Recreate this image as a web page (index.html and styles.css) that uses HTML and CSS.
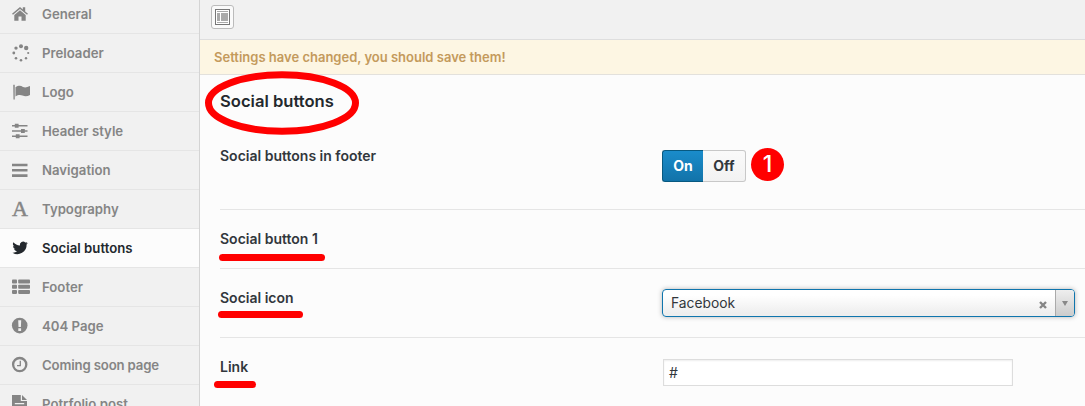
FILE: index.html
```html
<!DOCTYPE html>
<html lang="en">
<head>
<meta charset="utf-8">
<title>Theme options</title>
<link rel="stylesheet" href="styles.css">
</head>
<body>
<div class="app">
  <nav class="sidebar">
    <a class="item"><svg class="icon" viewBox="0 0 20 20"><path d="M2 9.800 10 3l2.800 2.400V3.300h2.400v4.100L18 9.800l-1 1L10 4.900 3 10.800z"/><path d="M4.300 11 10 6.200l5.700 4.800v5.700h-4.200v-4.200H8.500v4.200H4.300z"/></svg><span>General</span></a>
    <a class="item"><svg class="icon" viewBox="0 0 20 20"><circle cx="11" cy="3.200" r="2"/><circle cx="16.200" cy="5" r="2.200"/><circle cx="6" cy="5.100" r="1.700"/><circle cx="3.800" cy="10" r="1.400"/><circle cx="6" cy="15.200" r="1.300"/><circle cx="11" cy="17.300" r="1.300"/><circle cx="16" cy="15.200" r="1.200"/><circle cx="18.200" cy="10" r="1.100"/></svg><span>Preloader</span></a>
    <a class="item"><svg class="icon" viewBox="0 0 20 20"><path d="M3 3.200a1.200 1.200 0 0 1 2 0v14.300H3.300z" opacity=".75"/><path d="M5.500 5.300c3-2 5.200-1.700 7.500-.4 2 .9 3.800.5 7-.9v9c-2.500 1.300-4.800 1.800-7.500.5-2.500-1-4.500-.6-7 .9z"/></svg><span>Logo</span></a>
    <a class="item"><svg class="icon" viewBox="0 0 20 20"><path d="M2 4h15.500v1.500H2zM2 9.200h15.500v1.500H2zM2 14.400h15.500v1.500H2z"/><path d="M4.800 2.700h3.800v4H4.800zM11 8h3.800v4H11zM5.800 13.200h3.800v4H5.800z"/></svg><span>Header style</span></a>
    <a class="item"><svg class="icon" viewBox="0 0 20 20"><path d="M2 3.700h15.500v2.600H2zM2 9h15.500v2.600H2zM2 14.300h15.500v2.600H2z"/></svg><span>Navigation</span></a>
    <a class="item"><span class="letter">A</span><span>Typography</span></a>
    <a class="item active"><svg class="icon" viewBox="0 0 20 20"><path d="M17.800 5.100c-.6.300-1.200.4-1.800.5.600-.4 1.100-1 1.300-1.700-.6.300-1.300.6-2 .7a3.200 3.200 0 0 0-5.400 2.900c-2.600-.1-5-1.400-6.500-3.300a3.200 3.200 0 0 0 1 4.200c-.5 0-1-.1-1.400-.4 0 1.500 1.100 2.800 2.500 3.100-.5.100-1 .1-1.400 0 .4 1.300 1.600 2.200 3 2.200A6.500 6.500 0 0 1 2.500 14.700a9.200 9.200 0 0 0 14.100-8.200c.5-.4.900-.9 1.200-1.400z"/></svg><span>Social buttons</span></a>
    <a class="item"><svg class="icon" viewBox="0 0 20 20"><rect x="2" y="2.500" width="5" height="4" rx=".8"/><rect x="8.200" y="2.500" width="11.800" height="4" rx=".8"/><rect x="2" y="7.700" width="5" height="4" rx=".8"/><rect x="8.200" y="7.700" width="11.800" height="4" rx=".8"/><rect x="2" y="12.900" width="5" height="4" rx=".8"/><rect x="8.200" y="12.900" width="11.800" height="4" rx=".8"/></svg><span>Footer</span></a>
    <a class="item"><svg class="icon" viewBox="0 0 20 20"><circle cx="9.700" cy="9.600" r="7.800"/><path class="cut" d="M8.200 4.200h3l-.3 6.900H8.500zM8.300 12.300h2.800v2.600H8.300z"/></svg><span>404 Page</span></a>
    <a class="item"><svg class="icon" viewBox="0 0 20 20"><circle class="line" cx="9.700" cy="9.600" r="6.600"/><path class="thin" d="M10.300 5.800v4.800H7"/></svg><span class="tight">Coming soon page</span></a>
    <a class="item"><svg class="icon" viewBox="0 0 20 20"><path d="M2 1h8.800v6H17v12H2z"/><path d="M12 1l5 5h-5z"/><path class="cut" d="M4.800 9h9.400v1.300H4.800zM4.800 12h9.400v1.300H4.800z"/></svg><span>Potrfolio post</span></a>
  </nav>
  <main class="main">
    <header class="toolbar">
      <button class="expand"><svg width="16" height="17" viewBox="0 0 16 17"><rect x=".5" y=".5" width="14" height="15" fill="#fff" stroke="#777"/><path d="M2 2.500h11M2 13.500h11" stroke="#aaa"/><path d="M2 4h3v8H2zM6 4h7v8H6z" fill="#aaa"/></svg></button>
    </header>
    <div class="notice">Settings have changed, you should save them!</div>
    <section class="panel">
      <h2 class="title"><span>Social buttons</span><svg class="ring" width="156" height="66"><ellipse cx="78" cy="33" rx="73.500" ry="28.200"/></svg></h2>
      <div class="row row-toggle">
        <div class="label">Social buttons in footer</div>
        <div class="field"><div class="switch"><span class="on">On</span><span class="off">Off</span></div><span class="badge">1</span></div>
      </div>
      <div class="row row-head"><div class="label">Social button 1<i class="mark mark-button"></i></div></div>
      <div class="row row-icon">
        <div class="label">Social icon<i class="mark mark-icon"></i></div>
        <div class="select"><span class="value">Facebook</span><svg class="clear" width="8" height="8" viewBox="0 0 8 8"><path d="M1 1l6 6M7 1 1 7"/></svg><span class="arrow"></span></div>
      </div>
      <div class="row row-link">
        <div class="label">Link<i class="mark mark-link"></i></div>
        <div class="input">#</div>
      </div>
    </section>
  </main>
</div>
</body>
</html>
```
FILE: styles.css
```css
* { box-sizing: border-box; }
body { margin: 0; font-family: Inter, "Liberation Sans", sans-serif; font-size: 14px; font-weight: 600; color: #32373c; }
.app { display: flex; width: 1085px; height: 406px; overflow: hidden; background: #fcfcfc; }
.sidebar { flex: none; width: 200px; height: 434px; margin-top: -5px; background: #f1f1f1; border-right: 1px solid #d4d4d4; }
.item { display: flex; align-items: center; gap: 12px; height: 39px; padding: 0 0 1px 10px; border-bottom: 1px solid #e5e5e5; color: #858585; font-size: 13.2px; white-space: nowrap; }
.tight { letter-spacing: -.15px; }
.icon { width: 20px; height: 20px; fill: currentColor; }
.cut { fill: #f1f1f1; }
.line { fill: none; stroke: currentColor; stroke-width: 2.3; }
.thin { fill: none; stroke: currentColor; stroke-width: 1.3; }
.letter { width: 20px; font: 22px/20px "Liberation Serif", serif; text-align: center; -webkit-text-stroke: .5px currentColor; }
.item.active { background: #fcfcfc; color: #23282d; }
.main { flex: 1; min-width: 0; }
.toolbar { height: 40px; padding: 5px 0 0 11px; background: #f1f1f1; border-bottom: 1px solid #dedede; }
.expand { display: flex; align-items: center; justify-content: center; width: 23px; height: 24px; padding: 0; background: #fafafa; border: 1px solid #bbb; border-radius: 3px; }
.notice { height: 35px; padding-left: 14px; background: #fdf6e3; border-bottom: 1px solid #e3e1dc; color: #c49a5c; font-size: 13px; line-height: 35px; }
.panel { padding-left: 20px; }
.title { position: relative; margin: 0; height: 62px; padding-top: 15px; font-size: 16.6px; font-weight: 600; line-height: 22px; color: #23282d; }
.ring { position: absolute; left: -16.5px; top: -5px; fill: none; stroke: #f00; stroke-width: 7; }
.row { display: flex; border-bottom: 1px solid #e5e5e5; }
.label { position: relative; width: 442px; height: 20px; line-height: 20px; }
.row-toggle { height: 73px; padding-top: 9px; }
.row-head { height: 59px; padding-top: 19px; }
.row-icon { height: 69px; padding-top: 19px; }
.row-link { height: 69px; padding-top: 19px; border: 0; }
.field { display: flex; gap: 5px; align-items: center; height: 32px; margin-top: 4px; }
.switch { display: flex; width: 84px; height: 32px; border-radius: 3px; font-size: 14px; font-weight: 700; line-height: 30px; text-align: center; }
.on { width: 41px; color: #fff; background: linear-gradient(#1a8ccb, #1273a9); border: 1px solid #075981; border-right: 0; border-radius: 3px 0 0 3px; }
.off { width: 43px; background: linear-gradient(#fafafa, #f2f2f2); border: 1px solid #c8c8c8; border-left: 0; border-radius: 0 3px 3px 0; }
.badge { width: 33px; height: 33px; margin-top: -3px; border-radius: 50%; background: #f00; color: #fff; font-size: 23px; font-weight: 500; line-height: 33px; text-align: center; }
.mark { position: absolute; height: 7px; border-radius: 4px; background: #f00; }
.mark-button { left: -1px; top: 24.500px; width: 106px; }
.mark-icon { left: -2px; top: 23px; width: 85px; }
.mark-link { left: -6.500px; top: 24px; width: 42px; }
.select { display: flex; align-items: center; width: 413px; height: 28px; margin-top: 1px; padding-left: 8px; border: 1px solid #0f75ad; border-radius: 4px; background: linear-gradient(#fff 20%, #eee 90%); box-shadow: 0 0 5px rgba(0,0,0,.28); font-size: 13.8px; font-weight: 400; }
.value { flex: 1; margin-top: -1px; }
.clear { margin: 3px 8px 0 0; stroke: #858585; stroke-width: 2.4; }
.arrow { display: flex; align-items: center; justify-content: center; width: 19px; height: 26px; border-left: 1px solid #aaa; border-radius: 0 3px 3px 0; background: linear-gradient(#eee, #ccc); }
.arrow::before { content: ""; border: 3.5px solid transparent; border-top: 5px solid #888; border-bottom: 0; margin-top: 1px; }
.input { width: 350px; height: 27px; margin: 2px 0 0 1px; padding-left: 5px; background: #fff; border: 1px solid #ddd; box-shadow: inset 0 1px 2px rgba(0,0,0,.07); font-size: 14px; font-weight: 400; line-height: 26px; }
```
